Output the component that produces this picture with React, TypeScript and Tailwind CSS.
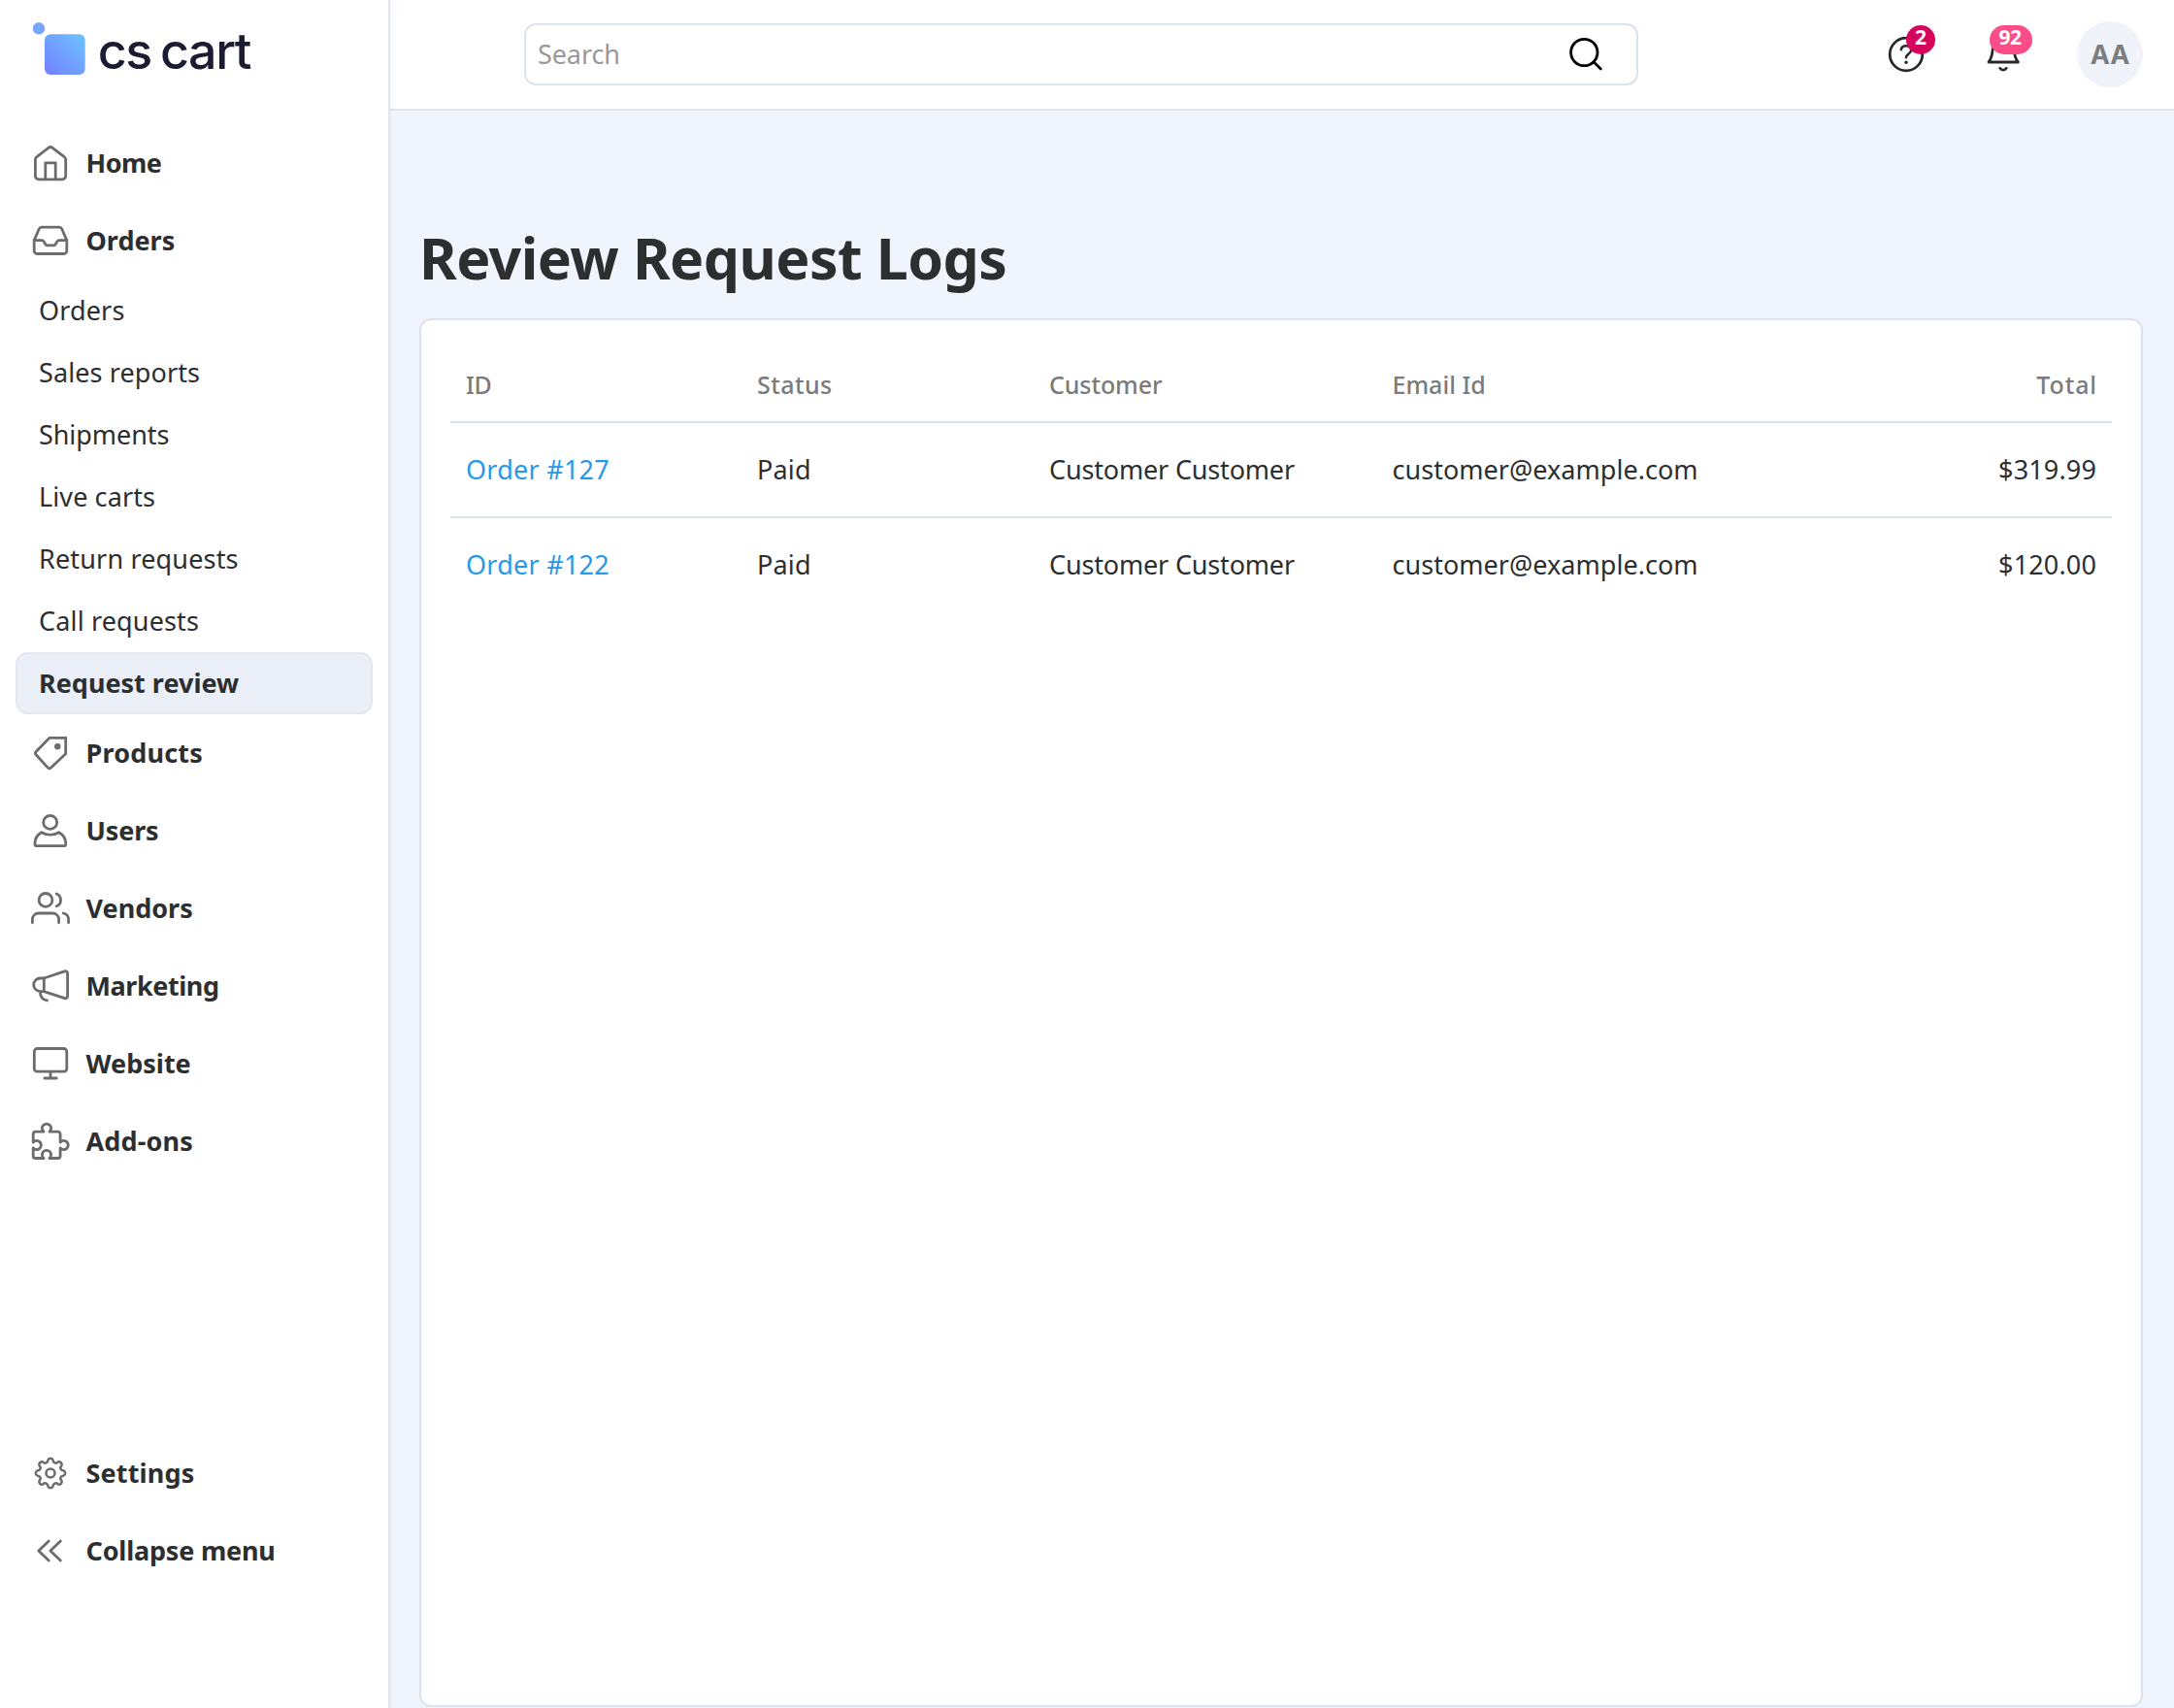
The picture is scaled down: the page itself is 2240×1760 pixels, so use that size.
import type { ReactNode } from "react";

function Icon({ children }: { children: ReactNode }) {
  return (
    <svg
      className="size-10 shrink-0 overflow-visible text-[#6c6c6c]"
      viewBox="0 0 40 40"
      fill="none"
      stroke="currentColor"
      strokeWidth="2.8"
      strokeLinecap="round"
      strokeLinejoin="round"
    >
      {children}
    </svg>
  );
}

const icons = {
  home: (
    <Icon>
      <path d="M4.4 16.6v16.7a3.5 3.5 0 0 0 3.5 3.5h24.3a3.5 3.5 0 0 0 3.5-3.5V16.6a3.5 3.5 0 0 0-1.5-2.9L22.1 4.3a3.6 3.6 0 0 0-4.2 0L5.9 13.7a3.5 3.5 0 0 0-1.5 2.9z" />
      <path d="M14.8 36.8v-17h10.4v17" strokeLinejoin="miter" />
    </Icon>
  ),
  inbox: (
    <Icon>
      <path d="M3.2 19.6v10.9a3 3 0 0 0 3 3h27.6a3 3 0 0 0 3-3V19.6l-5-11.6a3 3 0 0 0-2.7-1.8H10.9a3 3 0 0 0-2.7 1.8z" />
      <path d="M3.2 19.6h7.9a2 2 0 0 1 1.7.9l2 3.3a2 2 0 0 0 1.7 1h7a2 2 0 0 0 1.7-1l2-3.3a2 2 0 0 1 1.7-.9h7.9" />
    </Icon>
  ),
  tag: (
    <Icon>
      <path d="M19 4.3h16.7v16.4L20.6 35.1a2.4 2.4 0 0 1-3.3 0L5.2 21.8a2.4 2.4 0 0 1 0-3.3z" strokeLinejoin="miter" />
      <circle cx="27.3" cy="13.3" r="3.2" fill="currentColor" stroke="none" />
    </Icon>
  ),
  user: (
    <Icon>
      <circle cx="19.7" cy="11.4" r="7" />
      <path d="M10.8 21.7C6.5 24 3.9 28.5 3.9 33.4a2.2 2.2 0 0 0 2.2 2.2h27.5a2.2 2.2 0 0 0 2.2-2.2C35.8 28.5 33 24 28.7 21.7 23.3 24.9 16.2 24.9 10.8 21.7z" />
    </Icon>
  ),
  users: (
    <Icon>
      <circle cx="15" cy="11.4" r="6.9" />
      <path d="M26.2 5a6.9 6.9 0 0 1 0 12.8" />
      <path d="M1.4 34.800v-3.400a6.400 6.400 0 0 1 6.400-6.400h14.400a6.400 6.400 0 0 1 6.400 6.400v3.400M33.300 25c3.600.8 5.300 3.400 5.300 6.800v3" />
    </Icon>
  ),
  megaphone: (
    <Icon>
      <path d="M13.3 12 34.6 4.9a2.3 2.3 0 0 1 3 2.2v23.4a2.3 2.3 0 0 1-3 2.2L13.3 25.6z" />
      <path d="M13.3 12H9.500a6.8 6.8 0 0 0 0 13.6h3.800M9.400 25.8c0 5.5 2.500 8.600 7.100 9" />
    </Icon>
  ),
  monitor: (
    <Icon>
      <rect x="3.3" y="4.5" width="33.5" height="23.7" rx="3" />
      <path d="M20 28.2V35M13.900 35h12.400" />
    </Icon>
  ),
  puzzle: (
    <Icon>
      <path d="M4.8 10.2h8.3a4.6 4.6 0 1 1 5.8 0h8.6a2.6 2.6 0 0 1 2.6 2.6v8.3a4.6 4.6 0 1 1 0 5.8v8a2.6 2.6 0 0 1-2.6 2.6h-8.6a4.6 4.6 0 1 0-5.8 0H4.8a2.6 2.6 0 0 1-2.6-2.6v-8a4.6 4.6 0 1 0 0-5.8v-8.3a2.6 2.6 0 0 1 2.6-2.6z" />
    </Icon>
  ),
  gear: (
    <Icon>
      <path d="M17.35 6.66A2.8 2.8 0 0 1 22.65 6.66A2.8 2.8 0 0 0 27.56 8.69A2.8 2.8 0 0 1 31.31 12.44A2.8 2.8 0 0 0 33.34 17.35A2.8 2.8 0 0 1 33.34 22.65A2.8 2.8 0 0 0 31.31 27.56A2.8 2.8 0 0 1 27.56 31.31A2.8 2.8 0 0 0 22.65 33.34A2.8 2.8 0 0 1 17.35 33.34A2.8 2.8 0 0 0 12.44 31.31A2.8 2.8 0 0 1 8.69 27.56A2.8 2.8 0 0 0 6.66 22.65A2.8 2.8 0 0 1 6.66 17.35A2.8 2.8 0 0 0 8.69 12.44A2.8 2.8 0 0 1 12.44 8.69A2.8 2.8 0 0 0 17.35 6.66z" strokeWidth="2.5" />
      <circle cx="20" cy="20" r="4.5" strokeWidth="2.5" />
    </Icon>
  ),
  collapse: (
    <Icon>
      <path d="M18.2 9.9 7.8 20l10.4 10M30.3 9.9 19.9 20l10.4 10" />
    </Icon>
  ),
};

function MainItem({ icon, children, track = "" }: { icon: ReactNode; children: ReactNode; track?: string }) {
  return (
    <a className={"flex h-20 items-center gap-[16.5px] pl-8 font-bold " + track}>
      {icon}
      {children}
    </a>
  );
}

const subItems = [
  { label: "Orders", track: "tracking-[0.14px]" },
  { label: "Sales reports", track: "tracking-[0.1px]" },
  { label: "Shipments", track: "tracking-[-0.07px]" },
  { label: "Live carts", track: "tracking-[0.1px]" },
  { label: "Return requests", track: "tracking-[0.16px]" },
  { label: "Call requests", track: "tracking-[0.15px]" },
];

const orders = [
  { id: "Order #127", total: "$319.99" },
  { id: "Order #122", total: "$120.00" },
];

function Logo() {
  return (
    <div className="flex h-[128px] items-start pt-[22px] pl-[34px]">
      <svg className="h-[58px] w-[54px]" viewBox="0 0 54 58">
        <defs>
          <linearGradient id="mark" x1="0" y1="1" x2="1" y2="0">
            <stop offset="0" stopColor="#737fff" />
            <stop offset="1" stopColor="#6dc4ff" />
          </linearGradient>
        </defs>
        <circle cx="6" cy="7.3" r="6.2" fill="#76a5fc" />
        <rect x="12" y="13.3" width="41.7" height="41.7" rx="6" fill="url(#mark)" />
      </svg>
      <span className="mt-[2px] ml-[12.7px] font-['Inter',sans-serif] text-[52px] leading-[58px] font-medium tracking-[-1.4px] whitespace-nowrap text-[#1b1b31] [word-spacing:-3.4px]">
        cs cart
      </span>
    </div>
  );
}

function Sidebar() {
  return (
    <aside className="z-10 flex w-[402px] shrink-0 flex-col border-r-2 border-[#e1e6ed] bg-white shadow-[0_0_4px_rgba(40,60,90,0.08)]">
      <Logo />
      <nav className="flex flex-col">
        <MainItem icon={icons.home} track="tracking-[-0.5px]">Home</MainItem>
        <MainItem icon={icons.inbox}>Orders</MainItem>
        {subItems.map((s) => (
          <a key={s.label} className={"flex h-16 items-center pl-10 " + s.track}>
            {s.label}
          </a>
        ))}
        <a className="mx-4 flex h-16 items-center rounded-xl border-2 border-[#e5e8ef] bg-[#eaeff8] pl-[22px] font-bold">
          Request review
        </a>
        <MainItem icon={icons.tag} track="tracking-[0.18px]">Products</MainItem>
        <MainItem icon={icons.user} track="tracking-[-0.14px]">Users</MainItem>
        <MainItem icon={icons.users}>Vendors</MainItem>
        <MainItem icon={icons.megaphone} track="tracking-[-0.43px]">Marketing</MainItem>
        <MainItem icon={icons.monitor}>Website</MainItem>
        <MainItem icon={icons.puzzle} track="tracking-[0.15px]">Add-ons</MainItem>
      </nav>
      <div className="mt-auto mb-[122px] flex flex-col">
        <MainItem icon={icons.gear} track="tracking-[0.17px]">Settings</MainItem>
        <MainItem icon={icons.collapse} track="tracking-[-0.2px]">Collapse menu</MainItem>
      </div>
    </aside>
  );
}

function Header() {
  return (
    <header className="flex h-[114px] shrink-0 items-center border-b-2 border-[#e3e4e8] bg-white pr-8 pl-[138px]">
      <div className="flex h-16 w-[1148px] items-center justify-between rounded-xl border-2 border-[#dbe3ef] pr-8 pl-3">
        <span className="tracking-[-0.09px] text-[#999]">Search</span>
        <svg className="size-10" viewBox="0 0 40 40" fill="none" stroke="#000" strokeWidth="2.8" strokeLinecap="round">
          <circle cx="18.3" cy="18" r="13.7" />
          <path d="m28 27.8 7.3 7.3" />
        </svg>
      </div>
      <div className="ml-auto flex items-center">
        <div className="relative mr-[60px] size-10">
          <svg className="size-10" viewBox="0 0 40 40" fill="none" stroke="#28292b" strokeWidth="2.8" strokeLinecap="round">
            <circle cx="20" cy="20" r="16.8" />
            <path d="M14.8 15.2c.4-2.6 2.4-4 5.2-4 3 0 5.2 1.8 5.2 4.4 0 3.8-5.2 4-5.2 7.6" strokeWidth="2.5" />
            <circle cx="20" cy="28.2" r="1.7" fill="#28292b" stroke="none" />
          </svg>
          <span className="absolute top-[-10px] left-5 flex h-[30px] w-[30px] justify-center rounded-full bg-[#d6045a] text-[21px] leading-[25px] font-bold text-white">
            2
          </span>
        </div>
        <div className="relative mr-14 size-10">
          <svg className="size-10" viewBox="0 0 40 40" fill="none" stroke="#28292b" strokeWidth="2.8" strokeLinecap="round" strokeLinejoin="round">
            <path d="M5 28h30.4C31.6 23.6 31.4 19.4 31 14.6 30.4 8.600 26 4 20 4S9.800 8.600 9.200 14.600C8.800 19.400 8.600 23.600 5 28z" />
            <path d="M16.700 34.300c1.600 2.400 5 2.400 6.600 0" />
          </svg>
          <span className="absolute top-[-10px] left-[6px] flex h-[30px] w-11 justify-center rounded-full bg-[#fb4d88] pr-0.5 text-[21px] leading-[25px] font-bold tracking-[-0.5px] text-white">
            92
          </span>
        </div>
        <div className="flex size-[68px] items-center justify-center rounded-full bg-[#f0f3fa] font-['Inter',sans-serif] text-[27px] font-bold text-[#7b7d80]">
          <span className="mt-0.5">AA</span>
        </div>
      </div>
    </header>
  );
}

function OrdersTable() {
  const cols = "grid grid-cols-[300px_301px_354px_1fr_220px] items-center border-[#dce3ed]";
  return (
    <div className="mx-[30px] mt-[30px]">
      <div className={cols + " h-[76px] border-b-2 text-[25px] font-medium text-[#7b7b7b]"}>
        <span className="pl-4 tracking-[-0.4px]">ID</span>
        <span className="pl-4 tracking-[0.42px]">Status</span>
        <span className="pl-4 tracking-[-0.1px]">Customer</span>
        <span className="pl-[15.500px]">Email Id</span>
        <span className="pr-[15px] text-right tracking-[0.9px]">Total</span>
      </div>
      {orders.map((o, i) => (
        <div key={o.id} className={cols + (i < orders.length - 1 ? " h-[98px] border-b-2" : " h-24")}>
          <a className="pl-4 tracking-[0.25px] text-[#2799e8]">{o.id}</a>
          <span className="pl-4 tracking-[0.18px]">Paid</span>
          <span className="pl-4 tracking-[-0.17px]">Customer Customer</span>
          <span className="pl-[15.500px] tracking-[0.03px]">customer@example.com</span>
          <span className="pr-4 text-right tracking-[0.14px]">{o.total}</span>
        </div>
      ))}
    </div>
  );
}

export default function App() {
  return (
    <div className="flex h-[1760px] w-[2240px] overflow-hidden bg-[#f0f4fc] font-['Noto_Sans',sans-serif] text-[27px] whitespace-nowrap text-[#2d2e2f]">
      <Sidebar />
      <div className="flex min-w-0 grow flex-col">
        <Header />
        <main className="flex grow flex-col pt-[115px] pr-8 pl-[30px]">
          <h1 className="text-[59px] leading-[72px] font-bold tracking-[-0.57px]">Review Request Logs</h1>
          <section className="mt-[27px] mb-px grow rounded-xl border-2 border-[#dce3ed] bg-white">
            <OrdersTable />
          </section>
        </main>
      </div>
    </div>
  );
}
